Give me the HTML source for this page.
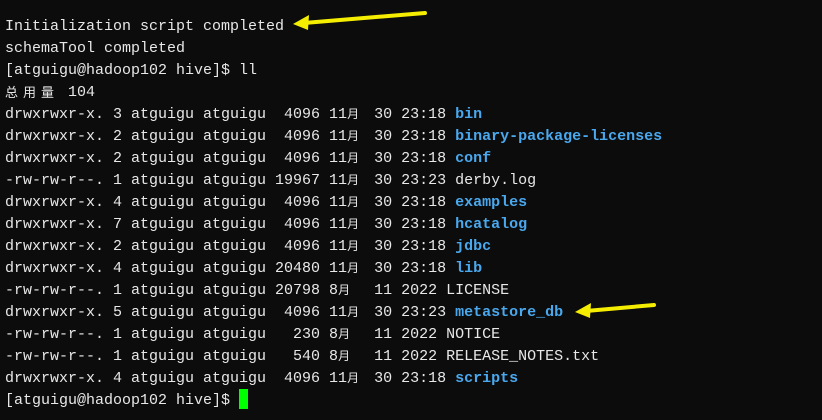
<!DOCTYPE html>
<html><head><meta charset="utf-8"><style>
html,body{margin:0;padding:0;background:#0c0c0c;width:822px;height:420px;overflow:hidden}
#t{position:absolute;left:5px;top:16px;font-family:"Liberation Mono","Noto Sans CJK SC",monospace;font-size:15px;color:#e8e8e8}
#t div{height:22px;line-height:22px;white-space:pre;overflow:visible}
.b{color:#4aa8ee;font-weight:bold}
.m{display:inline-block;width:18px;height:22px;vertical-align:top;line-height:20px;font-size:12px;font-family:"Noto Sans CJK SC",sans-serif}
.c{display:inline-block;width:18px;height:22px;vertical-align:top;line-height:19px;font-size:13px;font-family:"Noto Sans CJK SC",sans-serif}
.cur{position:absolute;left:239px;top:389px;width:9px;height:20px;background:#00ff00}
svg{position:absolute;left:0;top:0}
</style></head><body>
<div id="t">
<div>Initialization script completed</div>
<div>schemaTool completed</div>
<div>[atguigu@hadoop102 hive]$ ll</div>
<div><span class="c">总</span><span class="c">用</span><span class="c">量</span> 104</div>
<div>drwxrwxr-x. 3 atguigu atguigu  4096 11<span class="m">月</span> 30 23:18 <span class="b">bin</span></div>
<div>drwxrwxr-x. 2 atguigu atguigu  4096 11<span class="m">月</span> 30 23:18 <span class="b">binary-package-licenses</span></div>
<div>drwxrwxr-x. 2 atguigu atguigu  4096 11<span class="m">月</span> 30 23:18 <span class="b">conf</span></div>
<div>-rw-rw-r--. 1 atguigu atguigu 19967 11<span class="m">月</span> 30 23:23 derby.log</div>
<div>drwxrwxr-x. 4 atguigu atguigu  4096 11<span class="m">月</span> 30 23:18 <span class="b">examples</span></div>
<div>drwxrwxr-x. 7 atguigu atguigu  4096 11<span class="m">月</span> 30 23:18 <span class="b">hcatalog</span></div>
<div>drwxrwxr-x. 2 atguigu atguigu  4096 11<span class="m">月</span> 30 23:18 <span class="b">jdbc</span></div>
<div>drwxrwxr-x. 4 atguigu atguigu 20480 11<span class="m">月</span> 30 23:18 <span class="b">lib</span></div>
<div>-rw-rw-r--. 1 atguigu atguigu 20798 8<span class="m">月</span>  11 2022 LICENSE</div>
<div>drwxrwxr-x. 5 atguigu atguigu  4096 11<span class="m">月</span> 30 23:23 <span class="b">metastore_db</span></div>
<div>-rw-rw-r--. 1 atguigu atguigu   230 8<span class="m">月</span>  11 2022 NOTICE</div>
<div>-rw-rw-r--. 1 atguigu atguigu   540 8<span class="m">月</span>  11 2022 RELEASE_NOTES.txt</div>
<div>drwxrwxr-x. 4 atguigu atguigu  4096 11<span class="m">月</span> 30 23:18 <span class="b">scripts</span></div>
<div>[atguigu@hadoop102 hive]$ </div>
</div>
<div class="cur"></div>
<svg width="822" height="420">
<line x1="425" y1="13" x2="304" y2="23" stroke="#f5ee00" stroke-width="4" stroke-linecap="round"/>
<polygon points="293,24 309,15 308,30" fill="#f5ee00"/>
<line x1="654" y1="305" x2="586" y2="311" stroke="#f5ee00" stroke-width="4" stroke-linecap="round"/>
<polygon points="575,312 591,303 590,318" fill="#f5ee00"/>
</svg>
</body></html>
